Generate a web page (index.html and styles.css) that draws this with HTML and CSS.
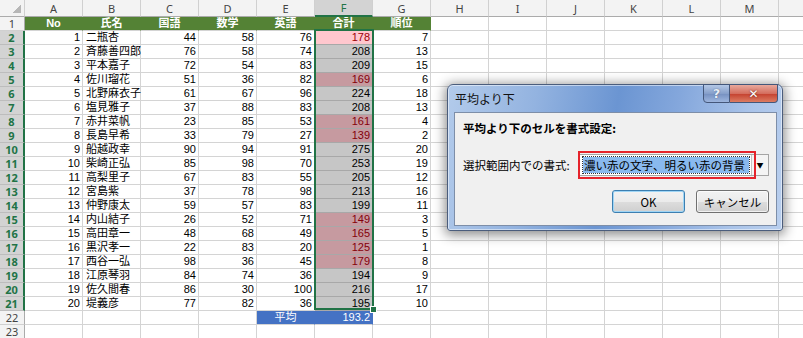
FILE: index.html
```html
<!DOCTYPE html>
<html lang="ja">
<head>
    <meta charset="UTF-8">
    <meta name="viewport" content="width=device-width, initial-scale=1.0">
    <title>平均より下</title>
    <link rel="stylesheet" href="styles.css">
</head>
<body>
<div class="sheet">
    <table class="grid">
        <colgroup><col class="c-rh"><col span="14" class="c-col"></colgroup>
        <tr class="colhead">
            <th class="corner"></th><th>A</th><th>B</th><th>C</th><th>D</th><th>E</th><th class="hl">F</th><th>G</th><th>H</th><th>I</th><th>J</th><th>K</th><th>L</th><th>M</th><th></th>
        </tr>
        <tr class="title">
            <th class="rh">1</th><td>No</td><td>氏名</td><td>国語</td><td>数学</td><td>英語</td><td>合計</td><td>順位</td><td class="e"></td><td class="e"></td><td class="e"></td><td class="e"></td><td class="e"></td><td class="e"></td><td class="e"></td>
        </tr>
        <tr><th class="rh sel">2</th><td>1</td><td class="nm">二瓶杏</td><td>44</td><td>58</td><td>76</td><td class="f act">178</td><td>7</td><td></td><td></td><td></td><td></td><td></td><td></td><td></td></tr>
        <tr><th class="rh sel">3</th><td>2</td><td class="nm">斉藤善四郎</td><td>76</td><td>58</td><td>74</td><td class="f">208</td><td>13</td><td></td><td></td><td></td><td></td><td></td><td></td><td></td></tr>
        <tr><th class="rh sel">4</th><td>3</td><td class="nm">平本嘉子</td><td>72</td><td>54</td><td>83</td><td class="f">209</td><td>15</td><td></td><td></td><td></td><td></td><td></td><td></td><td></td></tr>
        <tr><th class="rh sel">5</th><td>4</td><td class="nm">佐川瑠花</td><td>51</td><td>36</td><td>82</td><td class="f lo">169</td><td>6</td><td></td><td></td><td></td><td></td><td></td><td></td><td></td></tr>
        <tr><th class="rh sel">6</th><td>5</td><td class="nm">北野麻衣子</td><td>61</td><td>67</td><td>96</td><td class="f">224</td><td>18</td><td></td><td></td><td></td><td></td><td></td><td></td><td></td></tr>
        <tr><th class="rh sel">7</th><td>6</td><td class="nm">塩見雅子</td><td>37</td><td>88</td><td>83</td><td class="f">208</td><td>13</td><td></td><td></td><td></td><td></td><td></td><td></td><td></td></tr>
        <tr><th class="rh sel">8</th><td>7</td><td class="nm">赤井菜帆</td><td>23</td><td>85</td><td>53</td><td class="f lo">161</td><td>4</td><td></td><td></td><td></td><td></td><td></td><td></td><td></td></tr>
        <tr><th class="rh sel">9</th><td>8</td><td class="nm">長島早希</td><td>33</td><td>79</td><td>27</td><td class="f lo">139</td><td>2</td><td></td><td></td><td></td><td></td><td></td><td></td><td></td></tr>
        <tr><th class="rh sel">10</th><td>9</td><td class="nm">船越政幸</td><td>90</td><td>94</td><td>91</td><td class="f">275</td><td>20</td><td></td><td></td><td></td><td></td><td></td><td></td><td></td></tr>
        <tr><th class="rh sel">11</th><td>10</td><td class="nm">柴崎正弘</td><td>85</td><td>98</td><td>70</td><td class="f">253</td><td>19</td><td></td><td></td><td></td><td></td><td></td><td></td><td></td></tr>
        <tr><th class="rh sel">12</th><td>11</td><td class="nm">高梨里子</td><td>67</td><td>83</td><td>55</td><td class="f">205</td><td>12</td><td></td><td></td><td></td><td></td><td></td><td></td><td></td></tr>
        <tr><th class="rh sel">13</th><td>12</td><td class="nm">宮島紫</td><td>37</td><td>78</td><td>98</td><td class="f">213</td><td>16</td><td></td><td></td><td></td><td></td><td></td><td></td><td></td></tr>
        <tr><th class="rh sel">14</th><td>13</td><td class="nm">仲野康太</td><td>59</td><td>57</td><td>83</td><td class="f">199</td><td>11</td><td></td><td></td><td></td><td></td><td></td><td></td><td></td></tr>
        <tr><th class="rh sel">15</th><td>14</td><td class="nm">内山結子</td><td>26</td><td>52</td><td>71</td><td class="f lo">149</td><td>3</td><td></td><td></td><td></td><td></td><td></td><td></td><td></td></tr>
        <tr><th class="rh sel">16</th><td>15</td><td class="nm">高田章一</td><td>48</td><td>68</td><td>49</td><td class="f lo">165</td><td>5</td><td></td><td></td><td></td><td></td><td></td><td></td><td></td></tr>
        <tr><th class="rh sel">17</th><td>16</td><td class="nm">黒沢孝一</td><td>22</td><td>83</td><td>20</td><td class="f lo">125</td><td>1</td><td></td><td></td><td></td><td></td><td></td><td></td><td></td></tr>
        <tr><th class="rh sel">18</th><td>17</td><td class="nm">西谷一弘</td><td>98</td><td>36</td><td>45</td><td class="f lo">179</td><td>8</td><td></td><td></td><td></td><td></td><td></td><td></td><td></td></tr>
        <tr><th class="rh sel">19</th><td>18</td><td class="nm">江原琴羽</td><td>84</td><td>74</td><td>36</td><td class="f">194</td><td>9</td><td></td><td></td><td></td><td></td><td></td><td></td><td></td></tr>
        <tr><th class="rh sel">20</th><td>19</td><td class="nm">佐久間春</td><td>86</td><td>30</td><td>100</td><td class="f">216</td><td>17</td><td></td><td></td><td></td><td></td><td></td><td></td><td></td></tr>
        <tr><th class="rh sel">21</th><td>20</td><td class="nm">堤義彦</td><td>77</td><td>82</td><td>36</td><td class="f">195</td><td>10</td><td></td><td></td><td></td><td></td><td></td><td></td><td></td></tr>
        <tr><th class="rh">22</th><td></td><td></td><td></td><td></td><td class="avg ctr">平均</td><td class="avg">193.2</td><td></td><td></td><td></td><td></td><td></td><td></td><td></td><td></td></tr>
        <tr><th class="rh">23</th><td></td><td></td><td></td><td></td><td></td><td></td><td></td><td></td><td></td><td></td><td></td><td></td><td></td><td></td></tr>
    </table>

    <div class="selection"><span class="handle"></span></div>

    <div class="dialog">
        <div class="caption">平均より下</div>
        <div class="caption-buttons">
            <span class="cb-help">?</span>
            <span class="cb-close">✕</span>
        </div>
        <div class="client">
            <div class="lead">平均より下のセルを書式設定:</div>
            <div class="field-row">
                <span class="field-label">選択範囲内での書式:</span>
                <div class="combo">
                    <div class="combo-value"><span class="combo-sel">濃い赤の文字、明るい赤の背景</span></div>
                    <div class="combo-arrow">▼</div>
                    <div class="mark"></div>
                </div>
            </div>
            <div class="actions">
                <button class="btn default">OK</button>
                <button class="btn">キャンセル</button>
            </div>
        </div>
    </div>
</div>
</body>
</html>
```

FILE: styles.css
```css
body {
    margin: 0;
    overflow: hidden;
    background: #fff;
    font-family: "Noto Sans CJK JP", sans-serif;
}

.sheet {
    position: relative;
    width: 803px;
    height: 338px;
    overflow: hidden;
}

/* worksheet grid */

.grid {
    border-collapse: separate;
    border-spacing: 0;
    table-layout: fixed;
    width: 837px;
    font-family: "Liberation Sans", "Noto Sans CJK JP", sans-serif;
    font-size: 11px;
    color: #000;
}

.c-rh { width: 25px; }
.c-col { width: 58px; }

.grid td,
.grid th {
    box-sizing: border-box;
    height: 14px;
    padding: 0 2px;
    line-height: 13px;
    border-right: 1px solid #d4d4d4;
    border-bottom: 1px solid #d4d4d4;
    white-space: nowrap;
    text-align: right;
    font-weight: normal;
}

.grid td.nm { text-align: left; padding-left: 3px; }
.grid td.ctr { text-align: center; }

.colhead th {
    height: 16px;
    background: #f3f3f3;
    color: #444;
    font-family: "Noto Sans", sans-serif;
    font-size: 11px;
    line-height: 15px;
    text-align: center;
    border-right-color: #d0d0d0;
    border-bottom-color: #ababab;
}

.colhead th.corner {
    background: linear-gradient(135deg, transparent 50%, #b7b7b7 50%) no-repeat right 3px bottom 3px / 9px 9px, #f3f3f3;
}

.colhead th.hl {
    background: #d3d3d3;
    color: #217346;
    border-bottom: 2px solid #217346;
}

.grid th.rh {
    background: #f3f3f3;
    color: #444;
    font-family: "Noto Sans", sans-serif;
    font-size: 11px;
    text-align: center;
    padding: 0;
    border-right-color: #ababab;
    border-bottom-color: #d0d0d0;
}

.grid th.rh.sel {
    background: #d3d3d3;
    color: #217346;
    font-weight: bold;
    border-right: 2px solid #217346;
    border-bottom-color: #bdbdbd;
}

.title td {
    background: #548235;
    color: #fff;
    font-weight: bold;
    text-align: center;
    border-right-color: #548235;
}

.title td.e {
    background: #fff;
    border-right-color: #d4d4d4;
}

.grid td.f {
    background: #c6c6c6;
    border-bottom-color: #a8a8a8;
    border-right-color: #c6c6c6;
}

.grid td.f.lo {
    background: #c69aa0;
    color: #84000a;
}

.grid td.f.act {
    background: #ffc7ce;
    color: #9c0006;
}

.grid td.avg {
    background: #4472c4;
    color: #fff;
    border-right-color: #4472c4;
}

.selection {
    position: absolute;
    left: 314px;
    top: 29px;
    width: 60px;
    height: 281px;
    box-sizing: border-box;
    border: 2px solid #217346;
}

.handle {
    position: absolute;
    right: -5px;
    bottom: -5px;
    width: 7px;
    height: 7px;
    box-sizing: border-box;
    background: #217346;
    border: 1px solid #fff;
}

/* dialog */

.dialog {
    position: absolute;
    left: 447px;
    top: 84px;
    width: 336px;
    height: 147px;
    box-sizing: border-box;
    display: flex;
    flex-direction: column;
    padding: 0 5px 4px 6px;
    border: 1px solid #4b5d7c;
    border-radius: 6px 6px 3px 3px;
    background: linear-gradient(100deg, #b3cbeb 0%, #93b3e0 25%, #6b95d2 48%, #84a7dc 65%, #a9c3e9 85%, #b9cfee 100%);
    box-shadow: 0 2px 12px 2px rgba(0, 0, 0, 0.45), inset 0 0 0 1px rgba(255, 255, 255, 0.5);
}

.caption {
    height: 27px;
    line-height: 27px;
    padding-left: 1px;
    font-size: 12px;
    color: #111;
}

.caption-buttons {
    position: absolute;
    top: -1px;
    right: 4px;
    display: flex;
}

.caption-buttons span {
    box-sizing: border-box;
    height: 19px;
    display: flex;
    align-items: center;
    justify-content: center;
    border: 1px solid #44577a;
    font-family: "DejaVu Sans", sans-serif;
    font-weight: bold;
}

.cb-help {
    width: 27px;
    border-radius: 0 0 0 4px;
    background: linear-gradient(#b4c8e6, #869fca 50%, #7590c0 51%, #9db5de);
    color: #e8eef8;
    font-size: 13px;
    text-shadow: 0 0 1px #2d3f60;
}

.cb-close {
    width: 48px;
    border-left: none !important;
    border-radius: 0 0 4px 0;
    background: linear-gradient(#e8a89c, #d46e5e 50%, #c4402e 51%, #dc7c62);
    color: #fff;
    font-size: 12px;
    text-shadow: 0 0 2px #5a1a10;
}

.client {
    flex: 1;
    display: flex;
    flex-direction: column;
    padding: 7px 7px 0 8px;
    background: #f0f0f0;
    border: 1px solid #7d8ea8;
    font-size: 11.5px;
    color: #000;
}

.lead {
    font-weight: bold;
    line-height: 16px;
}

.field-row {
    display: flex;
    align-items: center;
    margin-top: 18px;
}

.field-label {
    width: 115px;
    flex: none;
}

.combo {
    position: relative;
    display: flex;
    width: 195px;
    height: 22px;
    box-sizing: border-box;
    background: #fff;
    border: 1px solid #a5a5a5;
}

.combo-value {
    flex: 1;
    padding: 2px 2px 2px 4px;
}

.combo-sel {
    display: block;
    height: 16px;
    line-height: 16px;
    padding-left: 1px;
    background: #89b9ee;
    outline: 1px dotted #333;
    white-space: nowrap;
}

.combo-arrow {
    width: 16px;
    display: flex;
    align-items: center;
    justify-content: center;
    border-left: 1px solid #c4c4c4;
    background: #f4f4f4;
    font-size: 7px;
    color: #000;
}

.mark {
    position: absolute;
    left: -1px;
    top: -4px;
    width: 178px;
    height: 28px;
    box-sizing: border-box;
    border: 2px solid #e5232b;
}

.actions {
    display: flex;
    justify-content: flex-end;
    gap: 11px;
    margin-top: 14px;
}

.btn {
    width: 73px;
    height: 23px;
    padding: 0;
    font-family: "Noto Sans CJK JP", sans-serif;
    font-size: 11.5px;
    color: #000;
    border: 1px solid #707070;
    border-radius: 3px;
    background: linear-gradient(#f2f2f2, #ebebeb 50%, #dddddd 51%, #cfcfcf);
    box-shadow: inset 0 0 0 1px rgba(255, 255, 255, 0.7);
}

.btn.default {
    border-color: #3c7fb1;
    box-shadow: inset 0 0 0 1px #9fd5f5;
}
```
